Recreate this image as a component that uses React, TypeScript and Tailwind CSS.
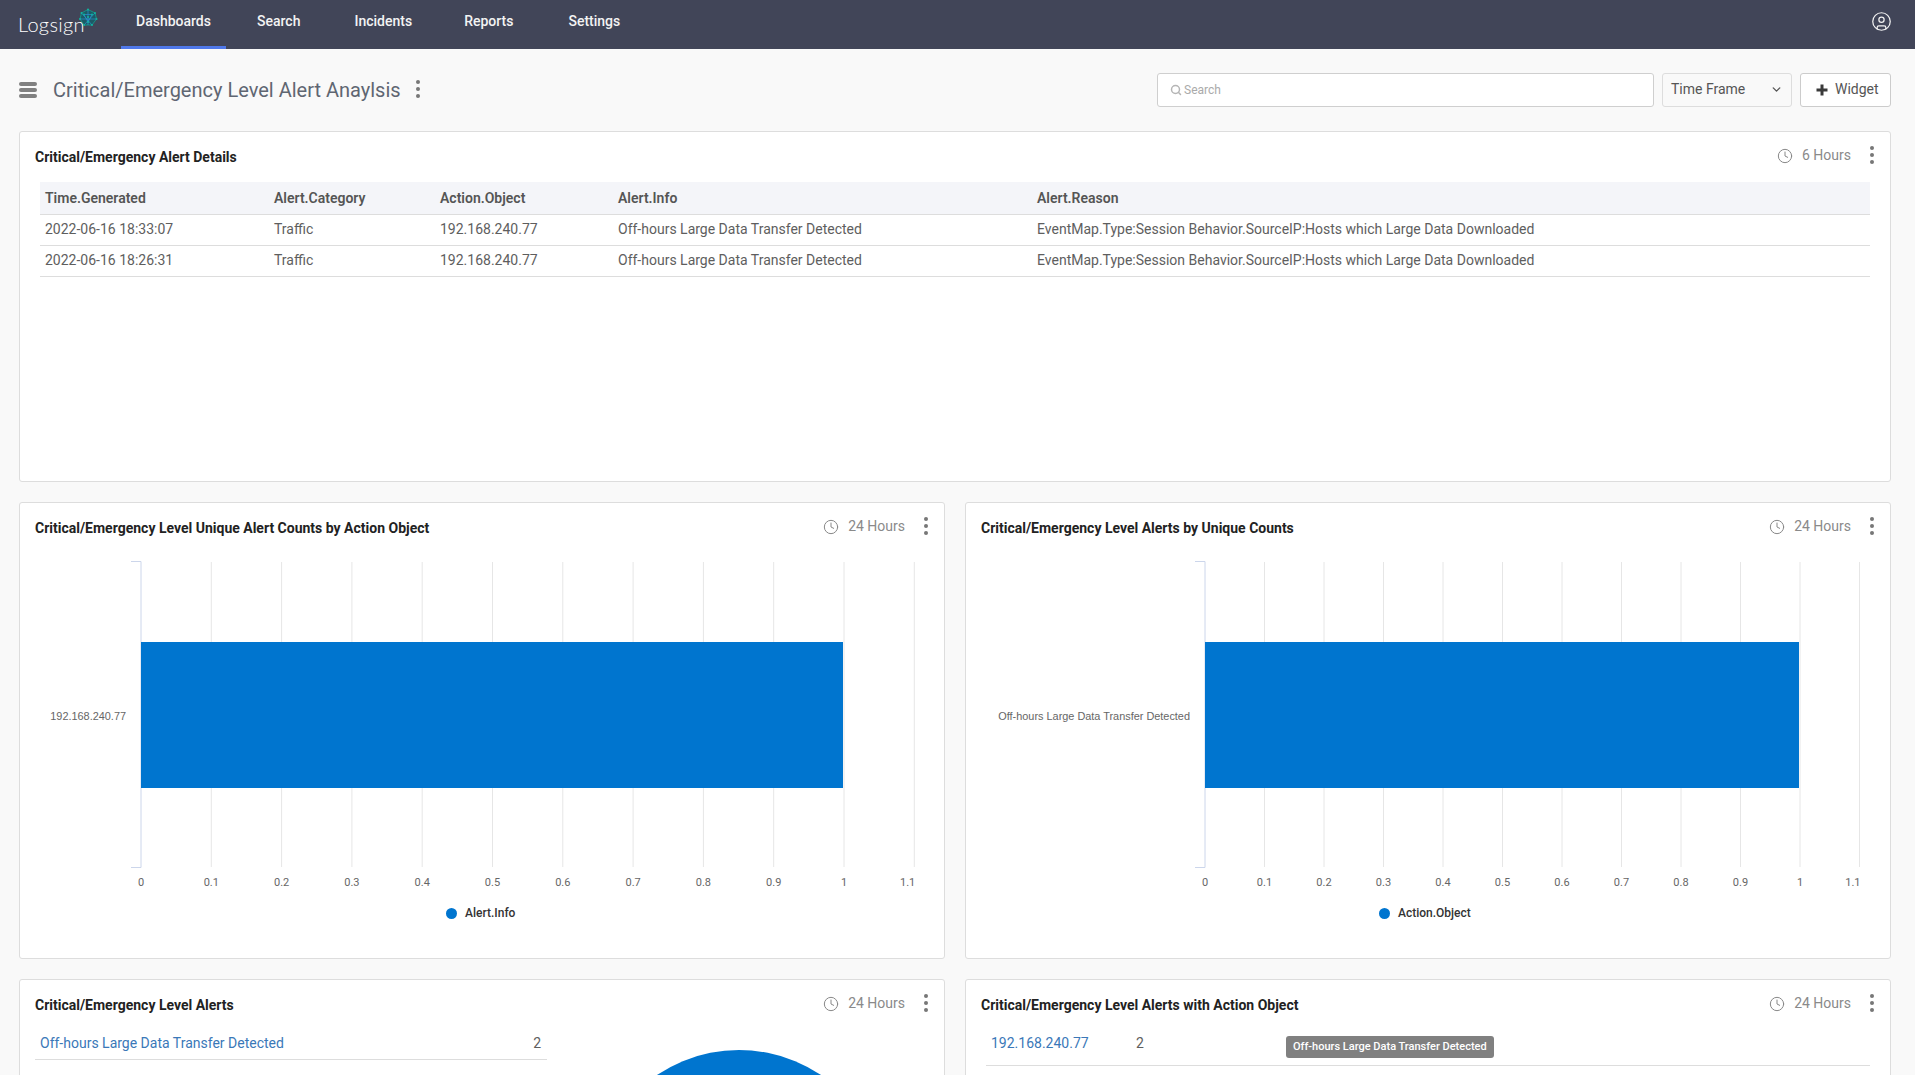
import { ChevronDown, CircleUser, Clock, Search } from "lucide-react";

const ROWS = [
  ["2022-06-16 18:33:07", "Traffic", "192.168.240.77", "Off-hours Large Data Transfer Detected"],
  ["2022-06-16 18:26:31", "Traffic", "192.168.240.77", "Off-hours Large Data Transfer Detected"],
];
const REASON = "EventMap.Type:Session Behavior.SourceIP:Hosts which Large Data Downloaded";
const TICKS = ["0", "0.1", "0.2", "0.3", "0.4", "0.5", "0.6", "0.7", "0.8", "0.9", "1", "1.1"];
const LOGO_NODES = [
  [10, 1.5], [17, 5], [18.5, 11], [14, 17], [6, 17], [2, 11], [3.5, 5], [10, 9], [6, 6.5], [14, 6.5], [10, 14],
];

function Kebab({ className = "" }: { className?: string }) {
  return (
    <div className={`flex flex-col gap-[3px] ${className}`}>
      <span className="size-[4px] rounded-full bg-[#777]" />
      <span className="size-[4px] rounded-full bg-[#777]" />
      <span className="size-[4px] rounded-full bg-[#777]" />
    </div>
  );
}

function Logo() {
  return (
    <div className="relative flex h-full w-[102px] pl-[18px] pt-[12px]">
      <span className="font-['Lato'] text-[20px] leading-[24px] font-light tracking-[0.3px] text-white">Logsign</span>
      <svg className="absolute left-[78px] top-[8px]" width="20" height="20" viewBox="0 0 20 20" fill="none">
        <path d="M10 1.5 17 5 18.5 11 14 17 6 17 2 11 3.5 5Z" fill="#1c5a66" stroke="#12a08f" strokeWidth="0.8" />
        <path d="M3.5 5 14 17M17 5 6 17M2 11H18.5M10 1.5V17M6 6.5H14M6 6.5 10 14 14 6.5" stroke="#2b8fd0" strokeWidth="0.7" />
        {LOGO_NODES.map(([x, y]) => (
          <circle key={`${x}-${y}`} cx={x} cy={y} r="1" fill="#10b5a0" />
        ))}
      </svg>
    </div>
  );
}

function NavBar() {
  return (
    <header className="flex h-[49px] items-stretch bg-[#414558] text-[14px] font-medium text-[#f3f3f3]">
      <Logo />
      <nav className="flex">
        <a className="ml-[19px] flex h-full w-[105px] items-start justify-center border-b-[3px] border-[#4f78ea] pt-[11px]">Dashboards</a>
        <a className="ml-[31px] pt-[11px]">Search</a>
        <a className="ml-[54px] pt-[11px]">Incidents</a>
        <a className="ml-[52px] pt-[11px]">Reports</a>
        <a className="ml-[55px] pt-[11px]">Settings</a>
      </nav>
      <div className="ml-auto pr-[23px] pt-[11px]">
        <CircleUser size={21} strokeWidth={1.4} />
      </div>
    </header>
  );
}

function Toolbar() {
  return (
    <div className="flex h-[82px] items-center pb-[1px] pl-[19px] pr-[24px]">
      <div className="flex w-[18px] flex-col gap-[2px]">
        <span className="h-[4px] rounded-sm bg-[#808080]" />
        <span className="h-[4px] rounded-sm bg-[#808080]" />
        <span className="h-[4px] rounded-sm bg-[#808080]" />
      </div>
      <h1 className="ml-[16px] text-[20px] font-normal text-[#5f6672]">Critical/Emergency Level Alert Anaylsis</h1>
      <Kebab className="mb-[2px] ml-[15px]" />
      <div className="ml-auto flex items-center gap-[8px]">
        <div className="flex h-[34px] w-[497px] items-center gap-[2px] rounded-[3px] border border-[#cfcfcf] bg-white pl-[12px] pt-[1px] text-[12px] text-[#aaa]">
          <Search size={12} strokeWidth={3} className="text-[#b5b5b5]" />
          <span>Search</span>
        </div>
        <div className="flex h-[34px] w-[130px] items-center justify-between rounded-[3px] border border-[#ddd] pl-[8px] pr-[8px] text-[14px] text-[#555]">
          <span>Time Frame</span>
          <ChevronDown size={13} strokeWidth={2.5} />
        </div>
        <div className="flex h-[34px] w-[91px] items-center gap-[7px] rounded-[3px] border border-[#ccc] bg-white pl-[15px] text-[14px] text-[#555]">
          <svg width="12" height="12" viewBox="0 0 12 12" className="text-[#3a3a3a]">
            <path d="M6 .5v11M.5 6h11" stroke="currentColor" strokeWidth="3" />
          </svg>
          <span>Widget</span>
        </div>
      </div>
    </div>
  );
}

function CardHeader({ title, hours }: { title: string; hours: string }) {
  return (
    <div className="flex h-[50px] items-start pl-[15px] pr-[16px] pt-[15px]">
      <h2 className="text-[14px] font-bold leading-[20px] text-[#222]">{title}</h2>
      <div className="ml-auto flex items-center text-[14px] leading-[20px] text-[#8a8a8a]">
        <Clock size={16} strokeWidth={1.5} className="mr-[9px] text-[#888]" />
        <span className="-mt-[2px]">{hours}</span>
        <Kebab className="-mt-[2px] ml-[19px]" />
      </div>
    </div>
  );
}

function DetailsTable() {
  return (
    <div className="pl-[20px] pr-[20px]">
      <table className="w-full table-fixed border-collapse text-left text-[14px] text-[#5e5e5e]">
        <colgroup>
          <col className="w-[229px]" />
          <col className="w-[166px]" />
          <col className="w-[178px]" />
          <col className="w-[419px]" />
          <col />
        </colgroup>
        <thead>
          <tr className="h-[32px] border-b border-[#ddd] bg-[#f4f5f9]">
            {["Time.Generated", "Alert.Category", "Action.Object", "Alert.Info", "Alert.Reason"].map((h) => (
              <th key={h} className="pl-[5px] pt-[1px] font-semibold text-[#555]">{h}</th>
            ))}
          </tr>
        </thead>
        <tbody>
          {ROWS.map((row) => (
            <tr key={row[0]} className="h-[31px] border-b border-[#ddd]">
              {row.map((c, i) => (
                <td key={i} className="pl-[5px]">{c}</td>
              ))}
              <td className="pl-[5px]">{REASON}</td>
            </tr>
          ))}
        </tbody>
      </table>
    </div>
  );
}

function BarChart({ label, labelX, x0, step, legend, legendX }: {
  label: string;
  labelX: number;
  x0: number;
  step: number;
  legend: string;
  legendX: number;
}) {
  const ticks = TICKS.map((t, i) => ({ t, x: x0 + step * i }));
  return (
    <div>
      <svg width="924" height="345" viewBox="0 0 924 345" className="block">
        {ticks.slice(1).map((t) => (
          <line key={t.t} x1={t.x} x2={t.x} y1="9" y2="314" stroke="#e6e6e6" />
        ))}
        <path d={`M${x0 - 10} 8.5H${x0}V314.5H${x0 - 10}`} fill="none" stroke="#ccd6eb" />
        <rect x={x0} y="89" width={step * 10 - 1} height="146" fill="#0075cf" />
        <text x={labelX} y="167" textAnchor="end" fontFamily="Liberation Sans" fontSize="10.9" fill="#666">{label}</text>
        {ticks.map((t) => (
          <text
            key={t.t}
            x={t.t === "1.1" ? t.x + 1 : t.x}
            y="333"
            textAnchor={t.t === "1.1" ? "end" : "middle"}
            fontFamily="Roboto"
            fontSize="11"
            fill="#666"
          >
            {t.t}
          </text>
        ))}
      </svg>
      <div className="mt-[6px] flex items-center gap-[8px] text-[12px] font-medium text-[#333]" style={{ paddingLeft: legendX }}>
        <span className="size-[11px] rounded-full bg-[#0075cf]" />
        <span>{legend}</span>
      </div>
    </div>
  );
}

export default function App() {
  return (
    <div className="h-screen overflow-hidden bg-[#f9f9f9] font-['Roboto',sans-serif]">
      <NavBar />
      <Toolbar />
      <main className="flex flex-col pl-[19px] pr-[24px]">
        <section className="h-[351px] rounded-[3px] border border-[#ddd] bg-white">
          <CardHeader title="Critical/Emergency Alert Details" hours="6 Hours" />
          <DetailsTable />
        </section>
        <div className="mt-[20px] grid grid-cols-[926px_1fr] gap-[20px]">
          <section className="h-[457px] rounded-[3px] border border-[#ddd] bg-white">
            <CardHeader title="Critical/Emergency Level Unique Alert Counts by Action Object" hours="24 Hours" />
            <BarChart label="192.168.240.77" labelX={106} x0={121} step={70.3} legend="Alert.Info" legendX={426} />
          </section>
          <section className="h-[457px] rounded-[3px] border border-[#ddd] bg-white">
            <CardHeader title="Critical/Emergency Level Alerts by Unique Counts" hours="24 Hours" />
            <BarChart label="Off-hours Large Data Transfer Detected" labelX={224} x0={239} step={59.5} legend="Action.Object" legendX={413} />
          </section>
        </div>
        <div className="mt-[20px] grid grid-cols-[926px_1fr] gap-[20px]">
          <section className="relative h-[140px] overflow-hidden rounded-[3px] border border-[#ddd] bg-white">
            <CardHeader title="Critical/Emergency Level Alerts" hours="24 Hours" />
            <div className="ml-[15px] flex h-[30px] w-[512px] items-start justify-between border-b border-[#ddd] pl-[5px] pr-[6px] pt-[3px] text-[14px] leading-[20px]">
              <a className="text-[#3a78b8]">Off-hours Large Data Transfer Detected</a>
              <span className="text-[#5e5e5e]">2</span>
            </div>
            <div className="absolute left-[572px] top-[70px] size-[294px] rounded-full bg-[#0075cf]" />
          </section>
          <section className="h-[140px] overflow-hidden rounded-[3px] border border-[#ddd] bg-white">
            <CardHeader title="Critical/Emergency Level Alerts with Action Object" hours="24 Hours" />
            <div className="ml-[20px] mr-[20px] flex h-[36px] items-start border-b border-[#ddd] pl-[5px] pt-[3px] text-[14px] leading-[20px]">
              <a className="w-[145px] text-[#3a78b8]">192.168.240.77</a>
              <span className="w-[150px] text-[#5e5e5e]">2</span>
              <span className="mt-[3px] rounded-[3px] bg-[#808080] px-[7px] py-[2px] text-[11px] font-medium leading-[18px] text-white">
                Off-hours Large Data Transfer Detected
              </span>
            </div>
          </section>
        </div>
      </main>
    </div>
  );
}
